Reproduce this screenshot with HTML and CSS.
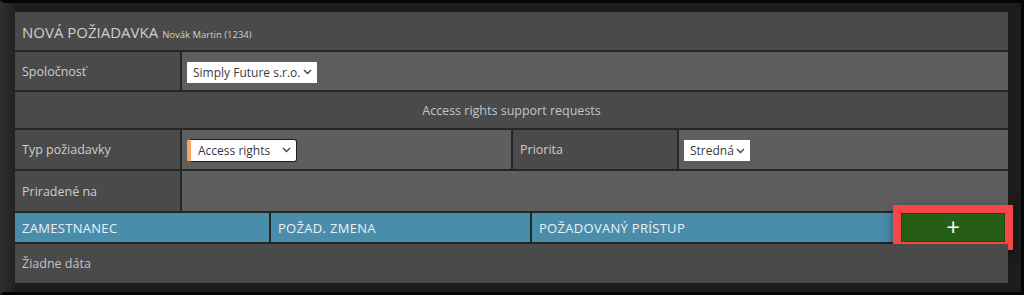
FILE: index.html
```html
<!DOCTYPE html>
<html>
<head>
    <title>Nová požiadavka</title>
    <meta name="viewport" content="width=device-width, initial-scale=1">
    <link rel="stylesheet" href="styles.css">
</head>
<body>
    <div class="frame">
        <div class="panel">
            <div class="panel-title">NOVÁ POŽIADAVKA <small>Novák Martin (1234)</small></div>

            <div class="form-row company">
                <div class="cell label">Spoločnosť</div>
                <div class="cell value">
                    <select class="field company-select">
                        <option>Simply Future s.r.o.</option>
                    </select>
                </div>
            </div>

            <div class="section-title">Access rights support requests</div>

            <div class="form-row quad">
                <div class="cell label">Typ požiadavky</div>
                <div class="cell value">
                    <select class="field focused">
                        <option>Access rights</option>
                    </select>
                </div>
                <div class="cell label">Priorita</div>
                <div class="cell value">
                    <select class="field priority-select">
                        <option>Stredná</option>
                    </select>
                </div>
            </div>

            <div class="form-row assigned">
                <div class="cell label">Priradené na</div>
                <div class="cell value"></div>
            </div>

            <!-- Requests table -->
            <div class="table-head">
                <div class="th">ZAMESTNANEC</div>
                <div class="th">POŽAD. ZMENA</div>
                <div class="th">POŽADOVANÝ PRÍSTUP</div>
                <div class="th add-cell">
                    <button class="add-button">+</button>
                </div>
            </div>
            <div class="empty-row">Žiadne dáta</div>
        </div>
    </div>
</body>
</html>
```

FILE: styles.css
```css
html, body {
    margin: 0;
    padding: 0;
    background: #000;
}
body {
    font-family: "Open Sans", Arial, sans-serif;
    width: 1024px;
    height: 295px;
    overflow: hidden;
}
.frame {
    box-sizing: border-box;
    height: 295px;
    border-top: 3px solid #050505;
    border-right: 3px solid #050505;
    border-bottom: 3px solid #050505;
    border-left: 3px solid #2e2e2e;
    background: linear-gradient(90deg, #2c2c2c 0, #222 12px, #1c1c1c 12px);
    padding: 9px 13px 0 12px;
}
.panel {
    background: #262626;
    display: flex;
    flex-direction: column;
    gap: 2px;
}
.panel-title {
    background: #4a4a4a;
    height: 38px;
    line-height: 40px;
    padding-left: 7px;
    color: #cfcfcf;
    font-size: 15px;
}
.panel-title small {
    font-size: 9.5px;
}
.form-row {
    display: grid;
    gap: 2px;
}
.form-row.company {
    grid-template-columns: 165px 1fr;
}
.form-row.company .cell {
    height: 38px;
}
.form-row.quad {
    grid-template-columns: 165px 1fr 164px 1fr;
}
.form-row.quad .cell {
    height: 39px;
}
.form-row.assigned {
    grid-template-columns: 165px 1fr;
}
.form-row.assigned .cell {
    height: 40px;
}
.cell {
    display: flex;
    align-items: center;
    font-size: 12.5px;
}
.cell.label {
    background: #4a4a4a;
    color: #cdcdcd;
    padding-left: 7px;
}
.cell.value {
    background: #5e5e5e;
    padding-left: 5px;
}
.field {
    appearance: none;
    -webkit-appearance: none;
    box-sizing: border-box;
    font-family: "Open Sans", Arial, sans-serif;
    font-size: 12px;
    color: #3a3a3a;
    background-color: #fff;
    background-image: url("data:image/svg+xml,%3Csvg xmlns='http://www.w3.org/2000/svg' width='9' height='6' viewBox='0 0 9 6'%3E%3Cpath d='M1 1l3.5 3.5L8 1' fill='none' stroke='%23444' stroke-width='1.4'/%3E%3C/svg%3E");
    background-repeat: no-repeat;
    background-position: right 5px center;
    border: none;
    border-radius: 0;
    height: 21px;
    padding: 0 16px 0 6px;
    margin-top: 2px;
}
.company-select {
    width: 130px;
}
.priority-select {
    width: 66px;
}
.field.focused {
    width: 110px;
    height: 23px;
    border: 1px solid #1e1e1e;
    border-left: 4px solid #f0a868;
    border-radius: 3px;
    padding-left: 7px;
    margin-top: 1px;
}
.section-title {
    background: #4a4a4a;
    height: 36px;
    display: flex;
    align-items: center;
    justify-content: center;
    color: #c4c4c4;
    font-size: 12.5px;
}
.table-head {
    display: grid;
    grid-template-columns: 254px 259px 1fr 105px;
    gap: 2px;
}
.th {
    background: #4a8dab;
    height: 29px;
    display: flex;
    align-items: center;
    padding-left: 7px;
    color: #e9f1f5;
    font-size: 13px;
    font-weight: 500;
    letter-spacing: 0.3px;
}
.th.add-cell {
    padding: 0 3px 0 0;
    margin-left: -2px;
}
.add-button {
    width: 100%;
    height: 29px;
    border: 1px solid #1d4a0f;
    background: #265e16;
    color: #fff;
    font-family: "Open Sans", Arial, sans-serif;
    font-size: 24px;
    line-height: 1;
    padding: 0 0 2px;
    cursor: pointer;
    box-shadow: 0 0 0 8px #f44848, 0 4px 10px 8px rgba(0,0,0,0.45);
}
.empty-row {
    background: #4a4a4a;
    height: 39px;
    display: flex;
    align-items: center;
    padding-left: 7px;
    color: #c4c4c4;
    font-size: 12.5px;
}
```
